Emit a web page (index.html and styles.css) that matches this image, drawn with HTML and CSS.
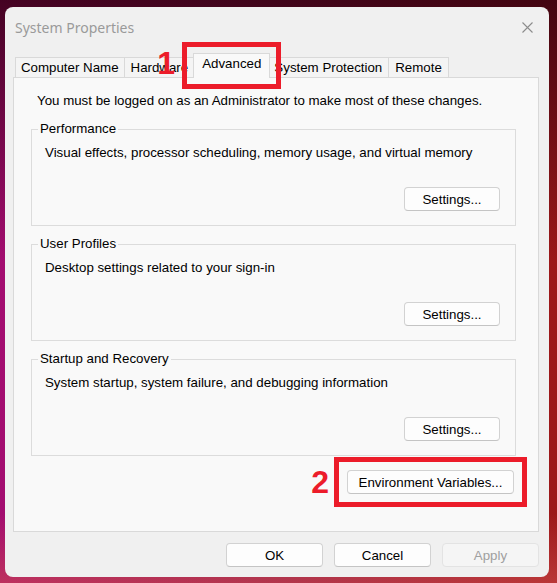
FILE: index.html
```html
<!DOCTYPE html>
<html lang="en">
<head>
    <meta charset="UTF-8">
    <meta name="viewport" content="width=device-width, initial-scale=1.0">
    <title>System Properties</title>
    <link rel="stylesheet" href="styles.css">
</head>
<body>
    <div class="window">
        <div class="titlebar">
            <span class="title">System Properties</span>
            <svg class="close" width="11" height="11" viewBox="0 0 11 11">
                <path d="M0.5 0.5 L10.5 10.5 M10.5 0.5 L0.5 10.5" stroke="#8c8c8c" stroke-width="1.1" fill="none"/>
            </svg>
        </div>
        <div class="tabs">
            <div class="tab">Computer Name</div>
            <div class="tab">Hardware</div>
            <div class="tab active"><span class="step step-tab">1</span>Advanced</div>
            <div class="tab">System Protection</div>
            <div class="tab">Remote</div>
        </div>
        <div class="panel">
            <p class="note">You must be logged on as an Administrator to make most of these changes.</p>
            <fieldset class="group">
                <legend>Performance</legend>
                <p class="desc">Visual effects, processor scheduling, memory usage, and virtual memory</p>
                <div class="group-actions"><button class="button">Settings...</button></div>
            </fieldset>
            <fieldset class="group">
                <legend>User Profiles</legend>
                <p class="desc">Desktop settings related to your sign-in</p>
                <div class="group-actions"><button class="button">Settings...</button></div>
            </fieldset>
            <fieldset class="group">
                <legend>Startup and Recovery</legend>
                <p class="desc">System startup, system failure, and debugging information</p>
                <div class="group-actions"><button class="button">Settings...</button></div>
            </fieldset>
            <div class="env-row">
                <span class="step">2</span>
                <span class="highlight"><button class="button env">Environment Variables...</button></span>
            </div>
        </div>
        <div class="dialog-buttons">
            <button class="button wide">OK</button>
            <button class="button wide">Cancel</button>
            <button class="button wide" disabled>Apply</button>
        </div>
    </div>
</body>
</html>
```

FILE: styles.css
```css
* {
    margin: 0;
    padding: 0;
    box-sizing: border-box;
}
body {
    height: 100vh;
    padding: 7px 8px 6px 5px;
    font-family: 'Liberation Sans', Arial, sans-serif;
    font-size: 13.3px;
    color: #000;
    background:
        linear-gradient(0deg, rgba(210, 80, 80, 0.55) 0%, rgba(210, 80, 80, 0) 12%),
        linear-gradient(180deg, rgba(45, 0, 15, 0.8) 0%, rgba(45, 0, 15, 0) 45%),
        linear-gradient(90deg, #a30c70 0%, #8e1848 50%, #9c1818 100%);
}
.window {
    height: 570px;
    display: flex;
    flex-direction: column;
    background: #f0f0f0;
    border-radius: 8px;
}
.titlebar {
    height: 40px;
    display: flex;
    align-items: center;
    justify-content: space-between;
    padding: 0 16px 0 10px;
}
.title {
    font-family: 'Noto Sans', sans-serif;
    font-size: 14px;
    color: #9a9a9a;
}
.tabs {
    display: flex;
    align-items: flex-end;
    margin-top: 6px;
    padding-left: 10px;
    position: relative;
    z-index: 1;
}
.tab {
    height: 20px;
    line-height: 19px;
    padding: 0 6px;
    margin-left: -1px;
    background: #f4f4f4;
    border: 1px solid #d9d9d9;
    border-bottom: none;
    white-space: nowrap;
}
.tab:first-child {
    margin-left: 0;
    padding: 0 5px;
}
.tab.active {
    position: relative;
    z-index: 2;
    height: 25px;
    line-height: 20px;
    padding: 0 8px;
    margin: 0 -2px -1px -2px;
    background: #f9f9f9;
    outline: 5px solid #ec1c2a;
    outline-offset: 6px;
}
.step {
    font-size: 32px;
    font-weight: bold;
    line-height: 1;
    color: #ec1c2a;
}
.step-tab {
    position: absolute;
    left: -37px;
    top: -7px;
}
.panel {
    height: 455px;
    margin: 0 10px 0 8px;
    padding: 15px 22px 0 17px;
    background: #f9f9f9;
    border: 1px solid #d9d9d9;
}
.note {
    line-height: 16px;
    margin-left: 6px;
    margin-bottom: 12px;
}
.group {
    border: 1px solid #dcdcdc;
    padding: 8px 15px 14px 6px;
    margin-bottom: 10px;
}
.group legend {
    line-height: 16px;
    padding: 0 2px;
}
.desc {
    line-height: 16px;
    margin-left: 7px;
}
.group-actions {
    display: flex;
    justify-content: flex-end;
    margin-top: 26px;
}
.button {
    width: 96px;
    height: 24px;
    font-family: inherit;
    font-size: 13.3px;
    color: #000;
    background: #fdfdfd;
    border: 1px solid #d2d2d2;
    border-bottom-color: #c4c4c4;
    border-radius: 4px;
}
.button:disabled {
    color: #a0a0a0;
    background: #f5f5f5;
    border-color: #e3e3e3;
}
.env-row {
    display: flex;
    justify-content: flex-end;
    align-items: center;
    gap: 18px;
    margin-top: 5px;
    padding-right: 2px;
}
.button.env {
    display: block;
    width: 167px;
}
.highlight {
    outline: 5px solid #ec1c2a;
    outline-offset: 8px;
}
.dialog-buttons {
    display: flex;
    justify-content: flex-end;
    gap: 11px;
    margin-top: 11px;
    padding-right: 10px;
}
.button.wide {
    width: 97px;
}
```
